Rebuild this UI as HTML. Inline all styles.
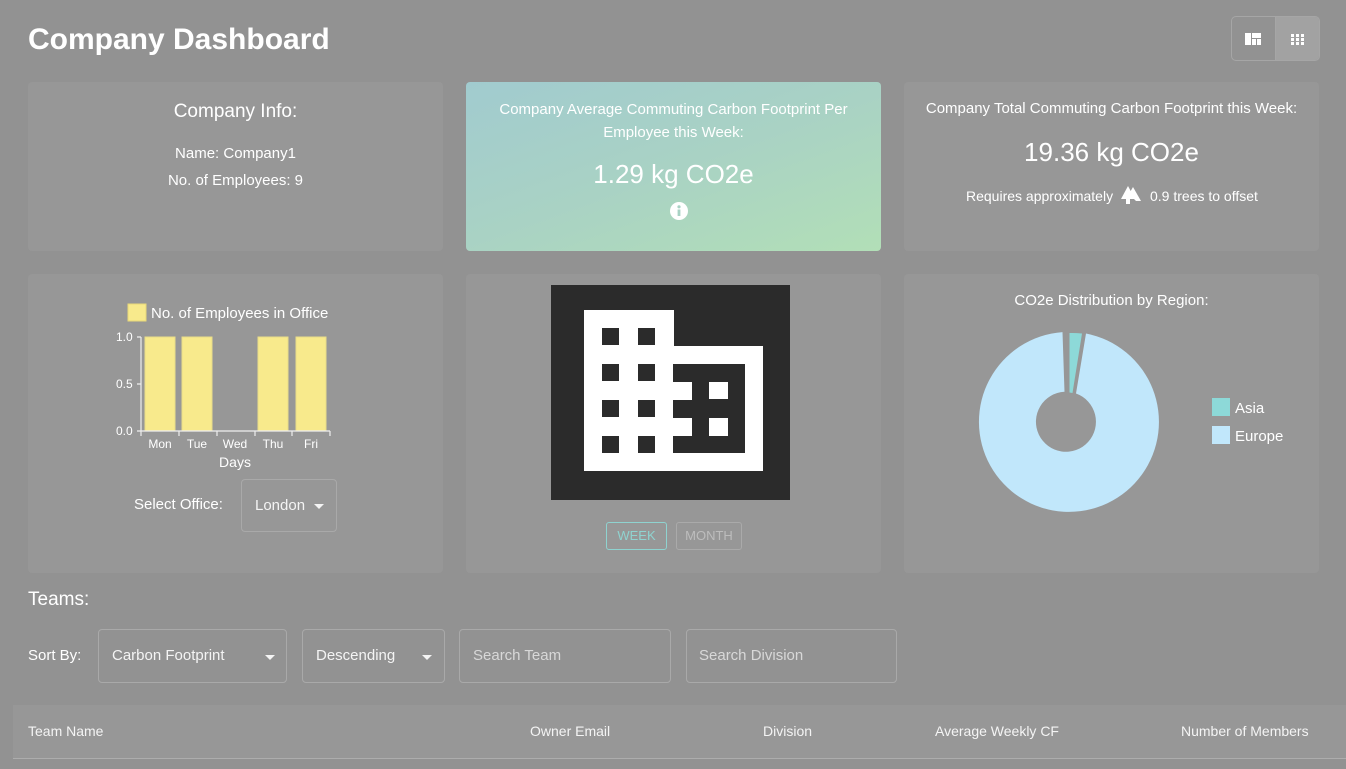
<!DOCTYPE html>
<html><head><style>
*{margin:0;padding:0;box-sizing:border-box}
body{width:1346px;height:769px;background:#929292;font-family:"Liberation Sans",sans-serif;color:#fff;position:relative;overflow:hidden}
.a{position:absolute}
.card{position:absolute;background:#979797;border-radius:4px}
.c{text-align:center;width:100%;position:absolute;left:0}
.box{position:absolute;border:1px solid #a9a9a9;border-radius:4px;font-size:15px;color:#f4f4f4}
.caret{position:absolute;width:0;height:0;border-left:5px solid transparent;border-right:5px solid transparent;border-top:5px solid #f4f4f4}
.th{position:absolute;top:18px;font-size:14px;color:#f4f4f4}
</style></head><body>
<div class="a" style="left:28px;top:23px;font-size:30px;font-weight:bold">Company Dashboard</div>
<div class="a" style="left:1231px;top:16px;width:89px;height:45px;border:1px solid #a6a6a6;border-radius:5px;overflow:hidden">
 <div class="a" style="left:43px;top:0;width:45px;height:45px;background:#a2a2a2;border-left:1px solid #a6a6a6"></div>
 <svg class="a" style="left:12px;top:15px" width="20" height="16"><rect x="1" y="1" width="6" height="12" fill="#fff"/><rect x="8" y="1" width="9" height="5" fill="#fff"/><rect x="8" y="7" width="4" height="6" fill="#fff"/><rect x="13" y="7" width="4" height="6" fill="#fff"/></svg>
 <svg class="a" style="left:58px;top:16px" width="18" height="14"><g fill="#fff"><rect x="1" y="1" width="3" height="3"/><rect x="6" y="1" width="3" height="3"/><rect x="11" y="1" width="3" height="3"/><rect x="1" y="5" width="3" height="3"/><rect x="6" y="5" width="3" height="3"/><rect x="11" y="5" width="3" height="3"/><rect x="1" y="9" width="3" height="3"/><rect x="6" y="9" width="3" height="3"/><rect x="11" y="9" width="3" height="3"/></g></svg>
</div>

<div class="card" style="left:28px;top:82px;width:415px;height:169px">
 <div class="c" style="top:19px;font-size:19px">Company Info:</div>
 <div class="c" style="top:63px;font-size:15px">Name: Company1</div>
 <div class="c" style="top:90px;font-size:15px">No. of Employees: 9</div>
</div>
<div class="card" style="left:466px;top:82px;width:415px;height:169px;background:linear-gradient(160deg,#a1cbcf 0%,#a9d2c4 50%,#b2dfb7 100%)">
 <div class="c" style="top:16px;font-size:15px;line-height:23px;padding:0 25px">Company Average Commuting Carbon Footprint Per Employee this Week:</div>
 <div class="c" style="top:77px;font-size:26px">1.29 kg CO2e</div>
 <svg class="a" style="left:203px;top:119px" width="20" height="20"><circle cx="10" cy="10" r="9" fill="#fff"/><rect x="8.6" y="8.5" width="2.8" height="6.5" fill="#a8d2c4"/><circle cx="10" cy="5.8" r="1.6" fill="#a8d2c4"/></svg>
</div>
<div class="card" style="left:904px;top:82px;width:415px;height:169px">
 <div class="c" style="top:18px;font-size:15px">Company Total Commuting Carbon Footprint this Week:</div>
 <div class="c" style="top:55px;font-size:26px">19.36 kg CO2e</div>
 <div class="a" style="left:62px;top:106px;font-size:14px">Requires approximately</div>
 <svg class="a" style="left:216px;top:102px" width="22" height="22"><path d="M8 2 L1 15 L6 15 L6 20 L10 20 L10 15 L15 15 Z" fill="#fff"/><path d="M13 3 L9 10 L16 17 L21 17 Z" fill="#fff"/></svg>
 <div class="a" style="left:246px;top:106px;font-size:14px">0.9 trees to offset</div>
</div>

<div class="card" style="left:28px;top:274px;width:415px;height:299px"></div>
<svg class="a" style="left:0;top:0" width="450" height="480">
 <rect x="128" y="304" width="18" height="17" fill="#f8ea8c" stroke="#e8d878"/>
 <text x="151" y="318" font-size="15" fill="#fff" font-family="Liberation Sans">No. of Employees in Office</text>
 <g fill="#f8ea8c" stroke="#e8dc88" stroke-width="1"><rect x="145" y="337" width="30" height="94"/><rect x="182" y="337" width="30" height="94"/><rect x="258" y="337" width="30" height="94"/><rect x="296" y="337" width="30" height="94"/></g>
 <g stroke="#eee" stroke-width="1.2" fill="none"><path d="M141 337 V431 H330"/><path d="M137 337H141M137 384H141M137 431H141"/><path d="M141 431v5M179 431v5M217 431v5M255 431v5M292 431v5M330 431v5"/></g>
 <g font-size="12" fill="#fff" font-family="Liberation Sans"><text x="116" y="341">1.0</text><text x="116" y="388">0.5</text><text x="116" y="435">0.0</text>
 <g text-anchor="middle"><text x="160" y="448">Mon</text><text x="197" y="448">Tue</text><text x="235" y="448">Wed</text><text x="273" y="448">Thu</text><text x="311" y="448">Fri</text><text x="235" y="467" font-size="14">Days</text></g></g>
</svg>
<div class="a" style="left:134px;top:496px;font-size:15px">Select Office:</div>
<div class="box" style="left:241px;top:479px;width:96px;height:53px"><span class="a" style="left:13px;top:17px">London</span><div class="caret" style="left:72px;top:24px"></div></div>

<div class="card" style="left:466px;top:274px;width:415px;height:299px"></div>
<svg class="a" style="left:551px;top:285px" width="240" height="215">
 <rect width="239" height="215" fill="#2b2b2b"/>
 <path d="M33 25H123V61H212V186H33Z" fill="#fff"/>
 <g fill="#2b2b2b"><rect x="51" y="43" width="17" height="17"/><rect x="87" y="43" width="17" height="17"/><rect x="51" y="79" width="17" height="17"/><rect x="87" y="79" width="17" height="17"/><rect x="51" y="115" width="17" height="17"/><rect x="87" y="115" width="17" height="17"/><rect x="51" y="151" width="17" height="17"/><rect x="87" y="151" width="17" height="17"/><rect x="122" y="79" width="72" height="89"/></g>
 <g fill="#fff"><rect x="122" y="97" width="19" height="18"/><rect x="122" y="133" width="19" height="18"/><rect x="158" y="97" width="19" height="17"/><rect x="158" y="133" width="19" height="18"/></g>
</svg>
<div class="a" style="left:606px;top:522px;width:61px;height:28px;border:1px solid #8fd3d0;border-radius:3px;color:#8fd3d0;font-size:13px;text-align:center;line-height:26px">WEEK</div>
<div class="a" style="left:676px;top:522px;width:66px;height:28px;border:1px solid #aaa;border-radius:3px;color:#bdbdbd;font-size:13px;text-align:center;line-height:26px">MONTH</div>

<div class="card" style="left:904px;top:274px;width:415px;height:299px">
 <div class="c" style="top:18px;font-size:15px">CO2e Distribution by Region:</div>
</div>
<svg class="a" style="left:0;top:0" width="1346" height="600">
 <path d="M1086 333.5 A90 90 0 1 1 1062.5 332.1 L1064.5 391.8 A30 30 0 1 0 1076 393.5 Z" fill="#c1e7fb"/>
 <path d="M1069.5 333 A90 90 0 0 1 1082 333.5 L1072.5 393 L1069.5 392.5 Z" fill="#8dd9d8"/>
 <rect x="1212" y="398" width="18" height="18" fill="#8dd9d8"/><rect x="1212" y="426" width="18" height="18" fill="#c1e7fb"/>
 <text x="1235" y="413" font-size="15" fill="#fff" font-family="Liberation Sans">Asia</text>
 <text x="1235" y="441" font-size="15" fill="#fff" font-family="Liberation Sans">Europe</text>
</svg>

<div class="a" style="left:28px;top:589px;font-size:19px">Teams:</div>
<div class="a" style="left:28px;top:647px;font-size:15px">Sort By:</div>
<div class="box" style="left:98px;top:629px;width:189px;height:54px"><span class="a" style="left:13px;top:17px">Carbon Footprint</span><div class="caret" style="left:166px;top:25px"></div></div>
<div class="box" style="left:302px;top:629px;width:143px;height:54px"><span class="a" style="left:13px;top:17px">Descending</span><div class="caret" style="left:119px;top:25px"></div></div>
<div class="box" style="left:459px;top:629px;width:212px;height:54px;color:#d8d8d8"><span class="a" style="left:13px;top:17px">Search Team</span></div>
<div class="box" style="left:686px;top:629px;width:211px;height:54px;color:#d8d8d8"><span class="a" style="left:12px;top:17px">Search Division</span></div>

<div class="a" style="left:13px;top:705px;width:1333px;height:54px;background:#979797;border-bottom:1px solid #adadad">
 <div class="th" style="left:15px">Team Name</div>
 <div class="th" style="left:517px">Owner Email</div>
 <div class="th" style="left:750px">Division</div>
 <div class="th" style="left:922px">Average Weekly CF</div>
 <div class="th" style="left:1168px">Number of Members</div>
</div>
</body></html>
